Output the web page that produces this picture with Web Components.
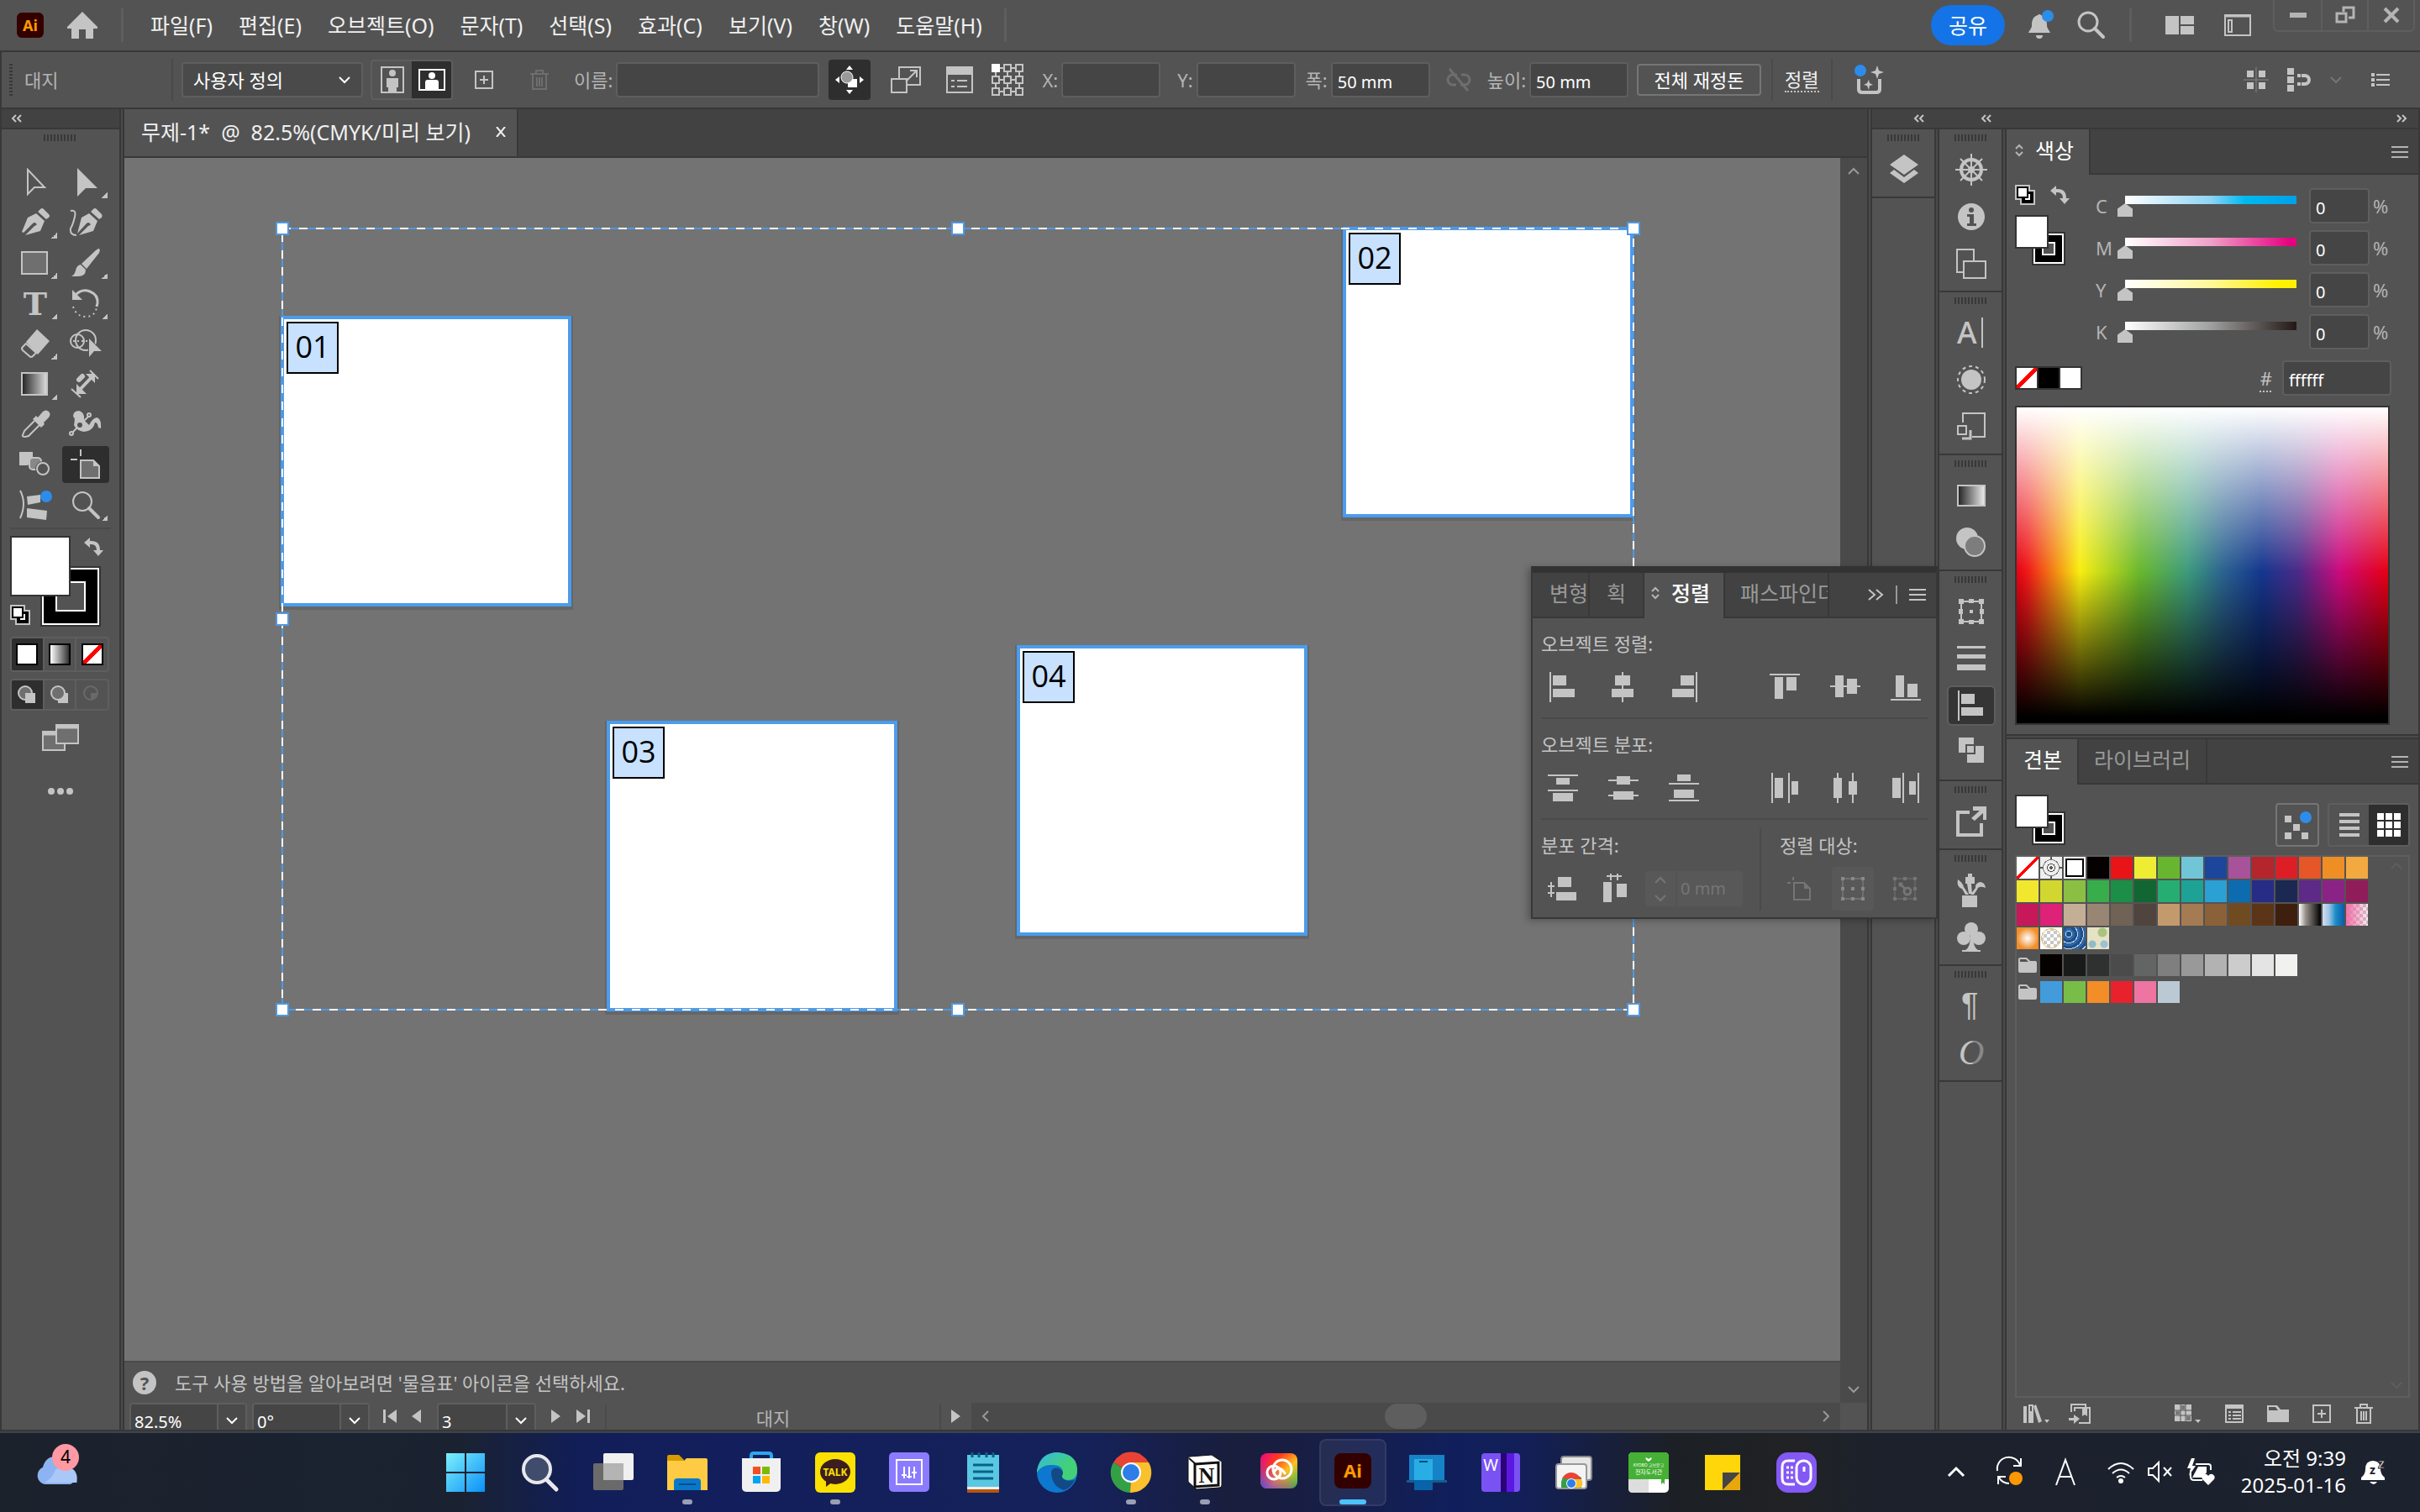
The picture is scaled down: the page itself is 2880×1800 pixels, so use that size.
<!DOCTYPE html>
<html lang="ko">
<head>
<meta charset="utf-8">
<title>무제-1* @ 82.5%(CMYK/미리 보기)</title>
<style>
  html, body {
    height: 100%;
    margin: 0;
  }
  body {
    background: #383838;
    color: #c4c4c4;
    font: 22px/28px "Noto Sans", "Noto Sans CJK KR", sans-serif;
    overflow: hidden;
  }
</style>
</head>
<body>
<app-shell>
  <menu-bar slot="menu"></menu-bar>
  <control-bar slot="control"></control-bar>
  <tool-box></tool-box>
  <doc-window></doc-window>
  <panel-dock>
    <color-panel></color-panel>
    <swatch-panel></swatch-panel>
  </panel-dock>
  <align-panel slot="floating"></align-panel>
  <task-bar slot="taskbar"></task-bar>
</app-shell>

<script>
// Icons: name -> [width, height, svg content]
const bars = (...list) => list.map(([x, y, w, h]) => `<rect x="${x}" y="${y}" width="${w}" height="${h}"/>`).join('');
const line = (d, w = 2) => `<path d="${d}" fill="none" stroke="currentColor" stroke-width="${w}"/>`;

const ICONS = {
  home: [36, 32, '<path d="M18 0 36 18v2h-5v12h-9V21h-8v11H5V20H0v-2z"/>'],
  bell: [30, 36, '<path d="M11 6a3 3 0 0 1 4 0c6 2 7 7 7 12 0 4 3 6 4 9H0c1-3 4-5 4-9 0-5 1-10 7-12zM9 30h8a4 4 0 0 1-8 0z"/><circle cx="23" cy="7" r="7" fill="#2d8ceb"/>'],
  search: [34, 34, '<circle cx="13" cy="13" r="11" fill="none" stroke="currentColor" stroke-width="3"/><path d="M21 21l10 10" stroke="currentColor" stroke-width="4" stroke-linecap="round"/>'],
  layout: [34, 22, bars([0, 0, 16, 22], [18, 0, 16, 10], [18, 12, 16, 10])],
  workspace: [32, 26, line('M1 1h30v24H1z') + line('M0 2h32', 3) + line('M5 7h4v14H5z')],
  minimize: [20, 6, bars([0, 0, 20, 6])],
  restore: [24, 20, line('M10 6V1h12v12h-6', 3) + line('M2 8h11v10H2z', 3)],
  close: [20, 16, line('M2 0l16 16M18 0L2 16', 4)],
  portrait: [28, 32, line('M1 1h26v30H1z') + '<circle cx="14" cy="8" r="4"/><path d="M7 14h14v11h-2v6H9v-6H7z"/>'],
  landscape: [32, 26, line('M1 1h30v24H1z') + '<circle cx="16" cy="8" r="4"/><path d="M8 25V16q0-3 3-3h10q3 0 3 3v9z"/>'],
  plusBox: [22, 22, line('M1 1h20v20H1zM11 6v10M6 11h10')],
  trash: [22, 24, line('M0 5h22M7 4V1h8v3M3 6v17h16V6M8 9v11M11 9v11M14 9v11')],
  moveArt: [34, 34, '<path d="M17 0l4 5h-8zM17 34l4-5h-8zM0 17l5-4v8zM34 17l-5-4v8z"/><path d="M15 16h11v10H15z"/><circle cx="14" cy="14" r="7" fill="#999" stroke="#fff"/>'],
  scaleArt: [36, 32, line('M1 15h18v16H1zM10 14V1h25v21H20M18 18L30 6M23 5h8v8')],
  options: [32, 32, line('M1 1h30v30H1zM6 17h4M6 24h4M13 17h12M13 24h12') + bars([0, 0, 32, 10])],
  refPoint: [38, 38, line('M9 5h5M24 5h5M9 19h5M24 19h5M9 33h5M24 33h5M5 9v5M5 24v5M19 9v5M19 24v5M33 9v5M33 24v5M15 1h8v8h-8zM29 1h8v8h-8zM1 15h8v8H1zM15 15h8v8h-8zM29 15h8v8h-8zM1 29h8v8H1zM15 29h8v8h-8zM29 29h8v8h-8z') + '<path d="M0 0h10v10H0z" fill="#fff"/>'],
  unlink: [28, 26, line('M12 7H7a5 5 0 0 0 0 12h4M17 7h4a5 5 0 0 1 0 12h-5M3 0l22 26', 3)],
  generate: [38, 36, line('M5 17v12q0 4 4 4h17q4 0 4-4V17', 4) + '<path d="M27 1l2 6 6 2-6 2-2 6-2-6-6-2 6-2zM17 18l1 4 4 2-4 1-1 5-2-5-4-1 4-2z"/><circle cx="7" cy="7" r="7" fill="#2d8ceb"/>'],
  pixelGrid: [30, 30, bars([4, 4, 8, 8], [18, 4, 8, 8], [4, 18, 8, 8], [18, 18, 8, 8]) + '<path d="M15 0v30M0 15h30" stroke="#888" stroke-width="1"/>'],
  snap: [28, 28, bars([0, 0, 8, 8], [0, 10, 8, 8], [0, 20, 8, 8], [12, 7, 4, 4], [12, 17, 4, 4]) + line('M17 9h4a5 5 0 0 1 0 10h-4', 4)],
  list: [22, 16, bars([0, 0, 4, 4], [0, 6, 4, 4], [0, 12, 4, 4], [6, 1, 16, 2], [6, 7, 16, 2], [6, 13, 16, 2])],
  chevron: [16, 10, line('M2 2l6 6 6-6')],
  chevronUp: [16, 10, line('M2 8l6-6 6 6')],
  chevronLeft: [10, 16, line('M8 2L2 8l6 6')],
  chevronRight: [10, 16, line('M2 2l6 6-6 6')],
  collapse: [12, 8, line('M5 0L1 4l4 4M11 0L7 4l4 4')],
  expand: [12, 8, line('M1 0l4 4-4 4M7 0l4 4-4 4')],
  expandBig: [20, 14, line('M2 1l7 6-7 6M11 1l7 6-7 6')],
  burger: [20, 14, bars([0, 0, 20, 2], [0, 6, 20, 2], [0, 12, 20, 2])],
  sorter: [10, 16, line('M1 6l4-4 4 4M1 10l4 4 4-4')],
  // Tools
  select: [36, 36, line('M9 3v29l8-8h12z')],
  direct: [36, 36, '<path d="M8 1v34l10-10h14z"/>'],
  pen: [36, 36, '<path d="M24 2q2-2 4 0l6 6q2 2 0 4l-3 2L21 5zM19 7l10 9-5 12-18 5 11-11q4-1 2-3t-4 0L4 30 2 29 9 12z"/>'],
  curvature: [40, 36, '<path d="M29 2q2-2 4 0l6 6q1 2 0 4l-3 2L26 5zM24 7l10 9-5 12-17 5 11-11q4-1 2-3t-4 0L10 31l5-19z"/>' + line('M2 4q7-2 5 7T2 25q-1 8 7 8')],
  rect: [34, 30, '<path d="M1 2h30v26H1z" fill="#6f6f6f" stroke="currentColor" stroke-width="2"/>'],
  brush: [36, 36, '<path d="M33 1q3 0 1 5L19 25l-6-6L30 3zM12 20l6 6q0 8-9 8H1q4-2 5-7 1-6 6-7z"/>'],
  type: [36, 36, '<text x="18" y="32" text-anchor="middle" font-family="DejaVu Serif" font-size="38" font-weight="700">T</text>'],
  rotate: [36, 36, line('M5 9Q13 0 23 4t9 14l-1 4', 3) + '<path d="M2 2v12h12z"/><path d="M3 22q4 12 15 12t13-11" fill="none" stroke="currentColor" stroke-width="2" stroke-dasharray="2 4"/>'],
  eraser: [36, 36, '<path d="M20 1l15 14-14 16L7 16z"/>' + line('M7 18l12 11-4 4q-2 2-4 0l-8-7q-2-2 0-4z')],
  shape: [40, 36, '<g fill="none" stroke="currentColor" stroke-width="2"><circle cx="10" cy="15" r="8"/><circle cx="20" cy="14" r="12"/></g><path d="M5 15h20" stroke="currentColor" stroke-width="2" stroke-dasharray="2 3"/><path d="M23 9v28l8-9h9z" fill="#535353"/><path d="M24 12v22l6-7h9z"/>'],
  gradient: [34, 30, '<linearGradient id="g"><stop stop-color="#222"/><stop offset="1" stop-color="#ddd"/></linearGradient><path d="M1 2h30v26H1z" fill="url(#g)" stroke="currentColor" stroke-width="2"/>'],
  measure: [36, 36, line('M23 2l10 10M1 24l11 10') + line('M10 26L26 9', 4) + '<path d="M18 6h11v11zM7 18v12h12z"/><path d="M10 13l4-4" stroke="currentColor" stroke-width="6" stroke-linecap="round"/>'],
  dropper: [36, 36, '<path d="M21 10l6-7q4-3 7 0t0 7l-6 6 1 2-4 4-10-10 4-4z"/>' + line('M17 14L5 26q-1 3-2 5t3 2l4-1 13-13')],
  puppet: [40, 36, '<path d="M5 9Q5 2 12 2q7 2 6 11l6 6q4-8 9-9 6 1 5 13l-3-1q-1-7-4-6-2 10-13 11-9-1-12-8 2-9-1-10z"/><g fill="#535353" stroke="currentColor" stroke-width="2"><path d="M4 28L24 8"/><circle cx="3" cy="29" r="2"/><circle cx="24" cy="7" r="2"/><circle cx="13" cy="19" r="4"/></g>'],
  blend: [38, 32, '<path d="M0 1h16v8l-6 8H0z"/><rect x="12" y="8" width="14" height="14" rx="4" fill="#888" stroke="currentColor" stroke-width="2"/><circle cx="28" cy="21" r="9" fill="#535353"/><circle cx="28" cy="21" r="7" fill="none" stroke="currentColor" stroke-width="2"/>'],
  artboard: [36, 36, '<path d="M12 13h15l7 7v14H12z" fill="#6f6f6f" stroke="currentColor" stroke-width="2"/><path d="M27 12v8h8z"/>' + line('M12 0v8M0 12h8')],
  wrap: [40, 38, line('M2 2q8 15 0 33') + '<path d="M10 9l16-2v9l-15 3zM10 23l24 3-1 11-23-3z"/><circle cx="33" cy="9" r="7" fill="#2d8ceb"/>'],
  zoom: [36, 36, '<circle cx="14" cy="14" r="11" fill="none" stroke="currentColor" stroke-width="2"/><path d="M22 22l11 11" stroke="currentColor" stroke-width="4" stroke-linecap="round"/>'],
  swap: [24, 22, '<path d="M0 6l7-6v4q12-1 12 11h4l-6 7-6-7h4q0-8-8-7v4z"/>'],
  defaults: [24, 24, '<path d="M0 0h18v6h6v18H6v-6H0z"/><path d="M8 8h14v14H8z" fill="#000"/><path d="M12 17h5v-6" fill="none" stroke="#fff" stroke-width="2"/><path d="M3 3h12v12H3z" fill="#fff" stroke="#000" stroke-width="2"/>'],
  drawNormal: [22, 22, '<circle cx="9" cy="9" r="8" fill="#6f6f6f" stroke="currentColor" stroke-width="2"/><rect x="9" y="9" width="12" height="12"/>'],
  drawBehind: [22, 22, '<rect x="9" y="9" width="12" height="12"/><circle cx="9" cy="9" r="8" fill="#6f6f6f" stroke="currentColor" stroke-width="2"/>'],
  drawInside: [22, 22, '<circle cx="9" cy="9" r="8" fill="none" stroke="currentColor" stroke-width="2"/><path d="M9 9h7v2q-2 5-7 5z"/>'],
  screens: [44, 32, '<g fill="#6f6f6f" stroke="currentColor" stroke-width="2"><path d="M1 9h26v22H1z"/><path d="M1 11h26" stroke-width="5"/><path d="M17 1h26v22H17z"/><path d="M17 3h26" stroke-width="5"/></g>'],
  dots: [30, 8, '<circle cx="4" cy="4" r="4"/><circle cx="15" cy="4" r="4"/><circle cx="26" cy="4" r="4"/>'],
  // Dock
  layers: [34, 36, '<path d="M17 0l17 12-17 12L0 12zM5 18l12 9 12-9 5 4-17 12L0 22z"/>'],
  wheel: [38, 38, '<circle cx="19" cy="19" r="12" fill="none" stroke="currentColor" stroke-width="4"/><circle cx="19" cy="19" r="4"/>' + line('M19 0v38M0 19h38M6 6l26 26M32 6L6 32')],
  info: [32, 32, '<circle cx="16" cy="16" r="16"/><path d="M11 13h8v11h3v3H11v-3h3v-8h-3z" fill="#535353"/><circle cx="16" cy="8" r="3" fill="#535353"/>'],
  artboards: [36, 36, line('M8 28H1V1h20v14M9 15h26v20H9z')],
  character: [34, 36, '<text x="0" y="31" font-family="Noto Sans" font-size="36" font-weight="500">A</text>' + bars([29, 0, 2, 36])],
  appearance: [34, 34, '<circle cx="17" cy="17" r="12"/><circle cx="17" cy="17" r="16" fill="none" stroke="currentColor" stroke-width="2" stroke-dasharray="4 4"/>'],
  assets: [34, 34, line('M7 12V1h26v28H18M1 16h10v10H1z') + line('M6 31h10V21', 3)],
  gradientPanel: [34, 26, '<linearGradient id="g"><stop stop-color="#222"/><stop offset="1" stop-color="#eee"/></linearGradient><path d="M1 1h32v24H1z" fill="url(#g)" stroke="currentColor" stroke-width="2"/>'],
  opacity: [36, 36, '<circle cx="13" cy="13" r="13"/><circle cx="22" cy="22" r="12" fill="#7d7d7d" stroke="currentColor" stroke-width="2"/>'],
  transform: [30, 30, line('M3 3h24v24H3z') + bars([0, 0, 6, 6], [12, 0, 6, 5], [24, 0, 6, 6], [0, 12, 5, 6], [25, 12, 5, 6], [0, 24, 6, 6], [12, 25, 6, 5], [24, 24, 6, 6], [13, 13, 4, 4])],
  strokes: [34, 30, bars([0, 0, 34, 3], [0, 10, 34, 5], [0, 22, 34, 7])],
  pathfinder: [30, 36, '<path d="M0 0h18v10h12v20H10V18H0z"/><path d="M9 19V9h10v10H9z" stroke="#535353" stroke-width="2"/>'],
  exportIcon: [36, 36, line('M16 7H2v27h28V20', 4) + '<path d="M20 0h16v16h-4V8L22 17l-4-3 10-9h-8z"/>'],
  brushes: [34, 40, '<path d="M6 26h18v14H6zM13 0h5v4h3v8h-4l1 12h-4l-2-12h-2V4h3zM1 7q6 4 7 9l6 9h-4l-4-7q-7-2-5-11zM31 16q-6-1-7 3l-4 6h-4l6-8q-1-5 5-7 6 0 7 7z"/>'],
  symbols: [34, 36, '<circle cx="17" cy="8" r="8"/><circle cx="8" cy="19" r="8"/><circle cx="26" cy="19" r="8"/><path d="M16 15h3q0 15 6 18H10q6-3 6-18zM6 33h22v2H6z"/>'],
  paragraph: [30, 36, '<text x="3" y="29" font-family="Liberation Sans" font-size="38">¶</text>'],
  opentype: [30, 36, '<linearGradient id="g"><stop offset=".5" stop-color="#c4c4c4"/><stop offset=".6" stop-color="#888"/></linearGradient><text x="0" y="31" font-family="Liberation Serif" font-size="42" font-style="italic" fill="url(#g)">O</text>'],
  // Align and distribute
  alignLeft: [36, 36, bars([2, 0, 2, 36], [6, 4, 16, 12], [6, 20, 26, 10])],
  alignCenter: [36, 36, bars([16, 0, 2, 36], [8, 4, 18, 12], [4, 20, 26, 10])],
  alignRight: [36, 36, bars([32, 0, 2, 36], [14, 4, 16, 12], [4, 20, 26, 10])],
  alignTop: [36, 36, bars([0, 2, 36, 2], [6, 6, 10, 26], [20, 6, 12, 16])],
  alignMiddle: [36, 36, bars([0, 16, 36, 2], [6, 4, 10, 26], [20, 8, 12, 18])],
  alignBottom: [36, 36, bars([6, 4, 10, 26], [20, 14, 12, 16], [0, 32, 36, 2])],
  distTop: [36, 36, bars([0, 2, 36, 2], [10, 6, 16, 8], [0, 20, 36, 2], [6, 24, 24, 10])],
  distMiddle: [36, 36, bars([0, 8, 36, 2], [10, 4, 16, 10], [0, 26, 36, 2], [6, 22, 24, 10])],
  distBottom: [36, 36, bars([10, 2, 16, 8], [0, 12, 36, 2], [6, 20, 24, 10], [0, 32, 36, 2])],
  distLeft: [36, 36, bars([2, 0, 2, 36], [6, 6, 10, 24], [22, 0, 2, 36], [26, 10, 8, 16])],
  distCenter: [36, 36, bars([4, 6, 10, 24], [8, 0, 2, 36], [22, 10, 10, 16], [26, 0, 2, 36])],
  distRight: [36, 36, bars([2, 6, 10, 24], [14, 0, 2, 36], [22, 10, 8, 16], [32, 0, 2, 36])],
  spaceV: [36, 36, bars([12, 4, 16, 12], [10, 22, 24, 10], [3, 10, 2, 18], [0, 14, 8, 2], [0, 22, 8, 2])],
  spaceH: [36, 36, bars([6, 10, 10, 24], [22, 12, 12, 16], [10, 2, 18, 2], [14, 0, 2, 8], [22, 0, 2, 8])],
  toArtboard: [28, 28, line('M8 7h12l7 7v13H8zM7 0v4M0 7h4') + '<path d="M20 6v8h8z"/>'],
  toSelection: [28, 28, line('M2 2h24v24H2z', 1) + bars([0, 0, 4, 4], [12, 0, 4, 4], [24, 0, 4, 4], [0, 12, 4, 4], [12, 12, 4, 4], [24, 12, 4, 4], [0, 24, 4, 4], [12, 24, 4, 4], [24, 24, 4, 4])],
  toKey: [28, 28, line('M2 2h24v24H2z', 1) + bars([0, 0, 4, 4], [12, 0, 4, 4], [24, 0, 4, 4], [0, 12, 4, 4], [24, 12, 4, 4], [0, 24, 4, 4], [12, 24, 4, 4], [24, 24, 4, 4]) + '<circle cx="17" cy="17" r="4" fill="none" stroke="currentColor" stroke-width="3"/>' + line('M7 7l8 8M7 11l4-4', 3)],
  // Swatches
  swatchCloud: [34, 34, bars([2, 6, 8, 8], [12, 16, 8, 8], [2, 26, 8, 8], [22, 26, 8, 8]) + '<circle cx="27" cy="8" r="7" fill="#2d8ceb"/>'],
  swatchList: [24, 28, bars([0, 0, 24, 4], [0, 8, 24, 4], [0, 16, 24, 4], [0, 24, 24, 4])],
  swatchGrid: [28, 28, bars([0, 0, 8, 8], [10, 0, 8, 8], [20, 0, 8, 8], [0, 10, 8, 8], [10, 10, 8, 8], [20, 10, 8, 8], [0, 20, 8, 8], [10, 20, 8, 8], [20, 20, 8, 8])],
  folder: [22, 18, '<path d="M0 2q0-2 2-2h8l4 4h6q2 0 2 2v10q0 2-2 2H2q-2 0-2-2z"/><path d="M2 2h7l3 3H2z" fill="#535353"/>'],
  folderBig: [26, 20, '<path d="M0 0h12l4 5h10v15H0z"/><path d="M2 2h8l3 4H2z" fill="#535353"/>'],
  library: [32, 22, bars([0, 2, 4, 20], [6, 0, 6, 22]) + '<path d="M12 2l3-2 7 20-4 2zM25 18h6l-3 4z"/><path d="M8 2h2v6H8z" fill="#535353"/>'],
  addLibrary: [26, 24, line('M3 10V1h17v3M7 9V5h18v18H12') + '<path d="M0 17h6v-4l7 5-7 6v-4H0zM16 5h6v10l-3-2-3 2z"/>'],
  kinds: [32, 22, bars([0, 0, 20, 20]) + '<path d="M7 0v20M13 0v20M0 7h20M0 13h20" stroke="#535353" stroke-width="1"/><path d="M8 1h4v5H8zM14 14h5v5h-5zM1 8h5v4H1z" fill="#777"/><path d="M24 18h7l-3 4z"/>'],
  swatchOptions: [22, 22, line('M1 1h20v20H1zM4 9h3M4 13h3M4 17h3M9 9h10M9 13h10M9 17h10') + bars([0, 0, 22, 5])],
  // Status bar
  first: [16, 16, bars([0, 0, 3, 16]) + '<path d="M16 0v16L5 8z"/>'],
  prev: [12, 16, '<path d="M11 0v16L0 8z"/>'],
  next: [12, 16, '<path d="M0 0v16l11-8z"/>'],
  last: [16, 16, '<path d="M0 0v16l11-8z"/>' + bars([13, 0, 3, 16])],
  // System tray
  trayUp: [22, 14, line('M2 12l9-9 9 9', 3)],
  sync: [34, 34, line('M2 16A14 14 0 0 1 29 9M30 1v9h-9M3 32v-9h9M4 24q4 7 12 7') + '<circle cx="24" cy="25" r="8" fill="#ff9800"/>'],
  inputMode: [26, 34, line('M2 33L13 3l11 30M6 23h14')],
  wifi: [34, 28, line('M2 11q15-14 30 0M7 16q10-9 20 0M12 21q5-4 10 0') + '<circle cx="17" cy="25" r="3"/>'],
  mute: [32, 26, line('M2 9h5l7-7v22l-7-7H2zM20 8l9 10M29 8l-9 10')],
  battery: [34, 32, line('M10 7h15q3 0 3 3v4M4 14v8q0 4 4 4h10') + '<path d="M5 0L0 12h4l-2 9 8-12H6l3-9zM13 10h10v7l-5 6H6zM25 32l-7-7q-2-4 2-6 3-1 5 2 2-3 5-2 4 2 2 6z"/>'],
  doNotDisturb: [30, 34, '<path d="M14 4q9 0 9 10 0 6 5 10v3H0v-3q5-4 5-10 0-10 9-10zM10 29h9q-4 6-9 0z"/><text x="10" y="20" font-size="14" font-weight="700" fill="#1c222e">z</text><text x="20" y="13" font-size="16" font-weight="700" stroke="#1c222e" stroke-width="1">z</text>']
};

const appIcon = (body) => [48, 48, body];
const APPS = {
  start: appIcon('<linearGradient id="g" x2="1" y2="1"><stop stop-color="#7df0fb"/><stop offset="1" stop-color="#0a90f8"/></linearGradient><path d="M1 1h22v22H1zM25 1h22v22H25zM1 25h22v22H1zM25 25h22v22H25z" fill="url(#g)"/>'),
  search: appIcon('<circle cx="21" cy="20" r="16" fill="#404c6c" stroke="#e8e8ec" stroke-width="4"/><path d="M33 33l11 11" stroke="#e8e8ec" stroke-width="5" stroke-linecap="round"/>'),
  views: appIcon('<rect x="12" y="1" width="36" height="32" rx="2" fill="#f0f0f0"/><rect y="13" width="36" height="32" rx="2" fill="#6a6a6a"/><path d="M12 13h24v20H12z" fill="#b4b4b4"/>'),
  explorer: appIcon('<path d="M0 5q0-2 2-2h12l6 6v10H0z" fill="#d89a00"/><path d="M0 10h20l3-3h23q2 0 2 2v36H0z" fill="#ffcb45"/><path d="M8 45V35q0-4 4-4h24q4 0 4 4v10z" fill="#0a78c8"/><path d="M14 38h20" stroke="#064d8d" stroke-width="2"/>'),
  store: appIcon('<path d="M12 12V4q0-3 3-3h18q3 0 3 3v8" fill="none" stroke="#2ba8f0" stroke-width="4"/><path d="M1 7h46v35q0 5-6 5H7q-6 0-6-5z" fill="#f0f0f0"/><path d="M14 17h9v9h-9z" fill="#f25022"/><path d="M25 17h9v9h-9z" fill="#7fba00"/><path d="M14 28h9v9h-9z" fill="#00a4ef"/><path d="M25 28h9v9h-9z" fill="#ffb900"/>'),
  talk: appIcon('<rect width="48" height="48" rx="6" fill="#fae100"/><ellipse cx="24" cy="23" rx="18" ry="15" fill="#3c1e1e"/><path d="M13 32v9l8-6z" fill="#3c1e1e"/><text x="24" y="28" text-anchor="middle" font-size="12" font-weight="700" fill="#fae100">TALK</text>'),
  equalizer: appIcon('<rect width="48" height="47" rx="5" fill="#8b7bff"/><path d="M9 9h30v29H9zM18 17v14M24 17v14M30 17v14M15 27h6M21 29h6M27 24h6" fill="none" stroke="#fff" stroke-width="2"/>'),
  notepad: appIcon('<path d="M5 3h38v38H5z" fill="#5ac8e2"/><path d="M5 41h38v3H5z" fill="#eee"/><path d="M5 44h38v4H5z" fill="#b8560e"/><path d="M12 15h24M12 23h24M12 31h24M11 0v6M19 0v6M28 0v6M36 0v6" stroke="#076386" stroke-width="3"/>'),
  edge: appIcon('<linearGradient id="g" x2="1" y2="1"><stop stop-color="#35b8e8"/><stop offset=".6" stop-color="#42d078"/></linearGradient><circle cx="24" cy="24" r="24" fill="#0d78cf"/><path d="M0 22Q4 0 25 0q23 2 23 21 0 12-11 12-10-1-6-8 0-10-12-10Q6 14 0 24z" fill="url(#g)"/><path d="M17 23q2-6 9-4 5 2 5 6-4 7 6 9l8-1q-4 9-13 12-15-5-15-22z" fill="#124a86"/>'),
  chrome: appIcon('<path d="M24 24L3 12A24 24 0 0 1 45 12z" fill="#ea4335"/><path d="M24 24L3 12a24 24 0 0 0 20 36z" fill="#34a046"/><path d="M24 24l-1 24A24 24 0 0 0 45 12H24z" fill="#fbc02d"/><circle cx="24" cy="24" r="12" fill="#fff"/><circle cx="24" cy="24" r="10" fill="#2f7de9"/>'),
  notion: appIcon('<path d="M4 7q0-2 2-2l26-2 12 8v28q0 3-3 3l-27 2-10-9z" fill="#fff" stroke="#111" stroke-width="1"/><path d="M12 14l28-2v27l-28 2z" fill="#fff" stroke="#111" stroke-width="3"/><path d="M5 7l8 7" stroke="#111" stroke-width="2"/><text x="26" y="36" text-anchor="middle" font-family="Liberation Serif" font-size="26" font-weight="700" fill="#111">N</text>'),
  cloud: appIcon('<linearGradient id="g" x2="1" y2="1"><stop stop-color="#f0047f"/><stop offset=".3" stop-color="#ff3b1e"/><stop offset=".6" stop-color="#ffc21e"/><stop offset="1" stop-color="#20b858"/></linearGradient><linearGradient id="h" x1="0" y1="1" x2=".6" y2=".4"><stop stop-color="#4a4cf0"/><stop offset="1" stop-color="#f0047f" stop-opacity="0"/></linearGradient><rect x="2" y="1" width="44" height="42" rx="8" fill="url(#g)"/><rect x="2" y="1" width="44" height="42" rx="8" fill="url(#h)"/><g fill="none" stroke="#fff" stroke-width="3"><circle cx="28" cy="20" r="11"/><circle cx="18" cy="24" r="8"/><path d="M18 24q4-8 10-3l4 5"/></g>'),
  illustrator: appIcon('<rect x="2" y="1" width="44" height="42" rx="8" fill="#330000"/><text x="24" y="30" text-anchor="middle" font-size="22" font-weight="700" fill="#ff9a00">Ai</text>'),
  phone: appIcon('<path d="M3 3h42v31H3z" fill="#1683c8"/><path d="M0 33h48v3H0z" fill="#155c8c"/><path d="M9 8h22v37H9z" fill="#28aee4"/><path d="M9 33h22v12H9z" fill="#0a62a8"/><path d="M15 11h10" stroke="#074c78" stroke-width="2"/>'),
  word: appIcon('<rect x="1" y="1" width="46" height="46" rx="4" fill="#7a52f4"/><path d="M24 1h16v46H24z" fill="#2a0474"/><path d="M31 1h9v46h-9z" fill="#5c18e0"/><text x="12" y="22" text-anchor="middle" font-size="19" fill="#fff">W</text>'),
  remote: appIcon('<rect x="8" y="5" width="36" height="28" rx="3" fill="#e6e6e6" stroke="#888" stroke-width="2"/><rect x="2" y="14" width="36" height="29" rx="3" fill="#f4f4f4" stroke="#999" stroke-width="2"/><path d="M8 42V35a13 13 0 0 1 12-11l12 6v12z" fill="#34a046"/><path d="M9 31q4-7 11-7t12 8z" fill="#ea4335"/><path d="M20 32h12q3 6-1 10H20z" fill="#fbc02d"/><circle cx="20" cy="37" r="6" fill="#fff"/><circle cx="20" cy="37" r="5" fill="#2f7de9"/>'),
  kyobo: appIcon('<rect width="48" height="48" rx="5" fill="#fff"/><path d="M0 32h24v16H5q-5 0-5-5z" fill="#ddd"/><path d="M0 32V5q0-5 5-5h38q5 0 5 5v27zM39 32h4v6l-2-2-2 2z" fill="#45b035"/><path d="M24 11q-5-3-3-5l3 2 3-2q2 2-3 5z" fill="#fff"/><text x="24" y="17" text-anchor="middle" font-size="5" fill="#fff">KYOBO 교보문고</text><text x="24" y="26" text-anchor="middle" font-size="7" fill="#fff">전자도서관</text>'),
  sticky: appIcon('<path d="M3 3h42v42H3z" fill="#ffd60a"/><path d="M24 45V24h21z" fill="#454545"/><path d="M24 45l21-21v21z" fill="#e8a80c"/>'),
  recorder: appIcon('<rect width="48" height="48" rx="14" fill="#8458f4"/><g fill="none" stroke="#fff" stroke-width="3"><path d="M22 38h-8q-7 0-7-7V17q0-7 7-7h8"/><rect x="24" y="10" width="17" height="28" rx="8"/><path d="M33 17v6"/></g><path d="M12 18h3M12 24h3M12 30h3M17 18h3M17 24h3M17 30h3" stroke="#fff" stroke-width="3"/>')
};

class AiIcon extends HTMLElement {
  connectedCallback() {
    const set = this.hasAttribute('app') ? APPS : ICONS;
    const [w, h, body] = set[this.getAttribute('name')];
    this.attachShadow({mode: 'open'}).innerHTML = `
    <style>
      :host { display: inline-flex; flex: none; }
      svg { display: block; overflow: visible; }
    </style>
    <svg width="${w}" height="${h}" viewBox="0 0 ${w} ${h}" fill="currentColor" aria-hidden="true">${body}</svg>`;
  }
}
window.customElements.define('ai-icon', AiIcon);

const icon = (name) => `<ai-icon name="${name}"></ai-icon>`;

// Rules that every shadow root starts from
const BASE = `
  :host { display: block; box-sizing: border-box; }
  * { box-sizing: border-box; }
  button, input, select {
    margin: 0;
    padding: 0;
    border: 0;
    background: none;
    color: inherit;
    font: inherit;
    outline: none;
    border-radius: 0;
  }
  button {
    display: inline-flex;
    align-items: center;
    justify-content: center;
    flex: none;
    white-space: nowrap;
  }
  input, select { min-width: 0; }
  .field {
    height: 42px;
    padding: 4px 6px 0;
    border: 2px solid #5e5e5e;
    border-radius: 4px;
    background: #454545;
    color: #fff;
    font-size: 20px;
  }
  .group {
    display: flex;
    border: 2px solid #5e5e5e;
    border-radius: 4px;
    overflow: hidden;
  }
  .on { background: #2e2e2e; color: #fff; }
`;

class Panel extends HTMLElement {
  connectedCallback() {
    this.attachShadow({mode: 'open'}).innerHTML = `<style>${BASE}${this.css()}</style>${this.html()}`;
  }
}

class AppShell extends Panel {
  css() {
    return `
      :host {
        display: flex;
        flex-direction: column;
        height: 100vh;
      }
      main {
        position: relative;
        display: flex;
        gap: 2px;
        flex: 1;
        min-height: 0;
        background: #4a4a4a;
        border-bottom: 2px solid #383838;
      }
    `;
  }
  html() {
    return `
      <slot name="menu"></slot>
      <slot name="control"></slot>
      <main><slot></slot><slot name="floating"></slot></main>
      <slot name="taskbar"></slot>`;
  }
}
window.customElements.define('app-shell', AppShell);

class MenuBar extends Panel {
  css() {
    return `
      :host {
        display: flex;
        align-items: center;
        height: 62px;
        background: #535353;
        border-bottom: 2px solid #383838;
      }
      .logo {
        width: 32px;
        height: 30px;
        margin: 0 28px 0 20px;
        border-radius: 6px;
        background: #330000;
        color: #ff9a00;
        font: 700 18px/30px "Noto Sans";
        text-align: center;
      }
      hr {
        width: 3px;
        height: 40px;
        margin: 0;
        border: 0;
        background: #5e5e5e;
      }
      nav {
        display: flex;
        gap: 31px;
        margin: 0 26px 0 32px;
        font-size: 25px;
        color: #f0f0f0;
      }
      .tools {
        display: flex;
        align-items: center;
        gap: 28px;
        margin-left: auto;
      }
      .share {
        width: 88px;
        height: 48px;
        border-radius: 24px;
        background: #1473e6;
        color: #fff;
        font-size: 25px;
      }
      .tools hr { margin-right: 12px; }
      .tools .wide { margin-right: 8px; }
      .window {
        display: flex;
        align-self: flex-start;
        height: 38px;
        margin: 0 6px 0 26px;
        border: 2px solid #5e5e5e;
        border-top: 0;
        border-radius: 0 0 6px 6px;
        color: #b4b4b4;
      }
      .window button {
        width: 55px;
      }
      .window button + button {
        border-left: 2px solid #5e5e5e;
      }
    `;
  }
  html() {
    const menus = ['파일(F)', '편집(E)', '오브젝트(O)', '문자(T)', '선택(S)', '효과(C)', '보기(V)', '창(W)', '도움말(H)'];
    return `
      <div class="logo">Ai</div>
      <button aria-label="홈">${icon('home')}</button>
      <hr style="margin-left: 28px">
      <nav>${menus.map((menu) => `<button>${menu}</button>`).join('')}</nav>
      <hr>
      <div class="tools">
        <button class="share">공유</button>
        <button aria-label="알림">${icon('bell')}</button>
        <button aria-label="검색">${icon('search')}</button>
        <hr>
        <button class="wide" aria-label="문서 정돈">${icon('layout')}</button>
        <button aria-label="작업 영역">${icon('workspace')}</button>
      </div>
      <div class="window">
        <button aria-label="최소화">${icon('minimize')}</button>
        <button aria-label="복원">${icon('restore')}</button>
        <button aria-label="닫기">${icon('close')}</button>
      </div>`;
  }
}
window.customElements.define('menu-bar', MenuBar);

class ControlBar extends Panel {
  css() {
    return `
      :host {
        display: flex;
        align-items: center;
        height: 68px;
        background: #535353;
        border-bottom: 2px solid #383838;
        border-left: 2px solid #383838;
      }
      .grip {
        width: 4px;
        height: 38px;
        margin: 0 14px 0 9px;
        background: repeating-linear-gradient(#383838 0 2px, transparent 2px 4px);
      }
      .title { width: 175px; color: #b4b4b4; }
      hr {
        width: 2px;
        height: 50px;
        margin: 0;
        border: 0;
        background: #4a4a4a;
      }
      .preset {
        display: flex;
        align-items: center;
        width: 216px;
        margin: 0 9px 0 10px;
        padding: 0 12px;
        background: #4a4a4a;
      }
      .preset select {
        flex: 1;
        appearance: none;
        font-size: 22px;
      }
      .group { height: 48px; }
      .group button { width: 47px; }
      .plain { margin-left: 26px; }
      .dim { margin: 0 30px 0 44px; color: #6e6e6e; }
      label {
        display: flex;
        align-items: center;
        gap: 4px;
        white-space: nowrap;
        color: #b4b4b4;
      }
      label .field { width: 118px; }
      label .name { width: 242px; }
      .move {
        width: 50px;
        height: 48px;
        margin: 0 24px 0 11px;
        border-radius: 4px;
      }
      .icons {
        display: flex;
        gap: 22px;
        margin-right: 22px;
      }
      .icons button:nth-child(2) { margin-left: 8px; }
      .size { margin-left: 12px; }
      .rearrange {
        width: 148px;
        height: 38px;
        margin: 0 12px 0 10px;
        border: 2px solid #757575;
        border-radius: 4px;
        color: #fff;
      }
      .align {
        height: 30px;
        margin: 0 14px;
        border-bottom: 2px dotted #c4c4c4;
        color: #f0f0f0;
      }
      .right {
        display: flex;
        align-items: center;
        margin-left: auto;
        gap: 22px;
        padding-right: 36px;
      }
      .right .last { margin-left: 12px; }
    `;
  }
  html() {
    return `
      <div class="grip"></div>
      <span class="title">대지</span>
      <hr>
      <div class="field preset">
        <select aria-label="사전 설정"><option>사용자 정의</option></select>
        ${icon('chevron')}
      </div>
      <div class="group">
        <button aria-label="세로">${icon('portrait')}</button>
        <button class="on" aria-label="가로">${icon('landscape')}</button>
      </div>
      <button class="plain" aria-label="새 대지">${icon('plusBox')}</button>
      <button class="dim" aria-label="대지 삭제">${icon('trash')}</button>
      <label>이름:<input class="field name"></label>
      <button class="move on" aria-label="아트웍 이동">${icon('moveArt')}</button>
      <div class="icons">
        <button aria-label="비율 조정">${icon('scaleArt')}</button>
        <button aria-label="대지 옵션">${icon('options')}</button>
        <button aria-label="참조점">${icon('refPoint')}</button>
      </div>
      <label>X:<input class="field"></label>
      <label style="margin-left: 20px">Y:<input class="field"></label>
      <label class="size">폭:<input class="field" value="50 mm"></label>
      <button style="margin: 0 20px; color: #6e6e6e" aria-label="비율 고정">${icon('unlink')}</button>
      <label>높이:<input class="field" value="50 mm"></label>
      <button class="rearrange">전체 재정돈</button>
      <hr>
      <button class="align">정렬</button>
      <hr>
      <button style="margin-left: 26px" aria-label="생성">${icon('generate')}</button>
      <div class="right">
        <button aria-label="픽셀에 물리기">${icon('pixelGrid')}</button>
        <button aria-label="물리기 옵션">${icon('snap')}</button>
        <button style="color: #757575" aria-label="더 보기">${icon('chevron')}</button>
        <button class="last" aria-label="메뉴">${icon('list')}</button>
      </div>`;
  }
}
window.customElements.define('control-bar', ControlBar);

class FillStroke extends Panel {
  css() {
    return `
      :host {
        --size: 40px;
        --shift: 20px;
        --band: 10px;
        display: grid;
        width: calc(var(--size) + var(--shift));
        height: calc(var(--size) + var(--shift));
      }
      button {
        grid-area: 1 / 1;
        width: var(--size);
        height: var(--size);
        border: 2px solid #333;
      }
      .fill { background: #fff; z-index: 1; }
      .stroke {
        place-self: end;
        padding: var(--band);
        background: #000;
        box-shadow: inset 0 0 0 2px #fff;
      }
      .stroke i {
        width: 100%;
        height: 100%;
        border: 2px solid #fff;
        background: #535353;
      }
      :host([large]) {
        --size: 72px;
        --shift: 36px;
        --band: 16px;
      }
    `;
  }
  html() {
    return '<button class="fill" aria-label="칠"></button><button class="stroke" aria-label="획"><i></i></button>';
  }
}
window.customElements.define('fill-stroke', FillStroke);

class ToolBox extends Panel {
  css() {
    return `
      :host {
        width: 144px;
        flex: none;
        background: #535353;
        border: solid #383838;
        border-width: 0 2px;
      }
      header {
        display: flex;
        align-items: center;
        height: 24px;
        padding-left: 12px;
        background: #424242;
        border-bottom: 2px solid #383838;
      }
      .grip {
        width: 38px;
        height: 8px;
        margin: 6px auto 25px 50px;
        background: repeating-linear-gradient(90deg, #383838 0 2px, transparent 2px 4px);
      }
      .tools {
        display: grid;
        grid-template-columns: 60px 60px;
        grid-auto-rows: 48px;
        place-items: center;
        padding-left: 10px;
      }
      .tools button {
        position: relative;
        width: 56px;
        height: 44px;
        border-radius: 4px;
      }
      .tools .more::after {
        content: "";
        position: absolute;
        right: 2px;
        bottom: 3px;
        border: solid transparent;
        border-width: 7px 0 0 7px;
        border-right: 0;
        width: 0;
        background: linear-gradient(135deg, transparent 50%, #c4c4c4 50%) border-box;
      }
      .tools .on { color: #c4c4c4; }
      .paint {
        display: grid;
        grid-template-columns: 108px auto;
        margin: 3px 10px 12px;
        padding-top: 8px;
        border-top: 2px solid #4a4a4a;
      }
      fill-stroke { grid-area: 1 / 1; }
      .swap {
        grid-area: 1 / 1;
        place-self: start end;
        margin: 2px -4px 0 0;
      }
      .defaults {
        grid-area: 1 / 1;
        place-self: end start;
        margin-bottom: 2px;
      }
      .group {
        height: 42px;
        margin: 0 10px 8px;
        width: 118px;
      }
      .group button { flex: 1; }
      .group button + button { border-left: 2px solid #5e5e5e; }
      .group i {
        width: 26px;
        height: 26px;
        border: 2px solid #000;
        background: #fff;
      }
      .group .fade { background: linear-gradient(90deg, #fff, #333); }
      .group .none { background: linear-gradient(-45deg, #fff0 43%, #f00 43% 57%, #fff0 57%) #fff; transform: scaleX(1); }
      .group .none { background: linear-gradient(135deg, #fff 43%, #f00 43% 57%, #fff 57%); }
      .modes { height: 38px; }
      .modes .on { color: #c4c4c4; }
      .modes .off { color: #6a6a6a; }
      .extra {
        display: flex;
        flex-direction: column;
        align-items: center;
        gap: 44px;
        padding: 8px 0 0 0;
      }
    `;
  }
  html() {
    // A star marks the tools that have a flyout of related tools
    const tools = ['select', 'direct*', 'pen*', 'curvature', 'rect*', 'brush*', 'type*', 'rotate*', 'eraser*', 'shape',
      'gradient*', 'measure', 'dropper', 'puppet', 'blend', 'artboard', 'wrap', 'zoom*'];
    const buttons = tools.map((tool) => {
      const name = tool.replace('*', '');
      const classes = [tool !== name ? 'more' : '', name === 'artboard' ? 'on' : ''].join(' ');
      return `<button class="${classes}" aria-label="${name}">${icon(name)}</button>`;
    });
    return `
      <header>${icon('collapse')}</header>
      <div class="grip"></div>
      <div class="tools">${buttons.join('')}</div>
      <div class="paint">
        <fill-stroke large></fill-stroke>
        <button class="swap" aria-label="칠과 획 교체">${icon('swap')}</button>
        <button class="defaults" aria-label="초기값">${icon('defaults')}</button>
      </div>
      <div class="group">
        <button class="on" aria-label="색상"><i></i></button>
        <button aria-label="그레이디언트"><i class="fade"></i></button>
        <button aria-label="없음"><i class="none"></i></button>
      </div>
      <div class="group modes">
        <button class="on" aria-label="표준 그리기">${icon('drawNormal')}</button>
        <button aria-label="배경 그리기">${icon('drawBehind')}</button>
        <button class="off" aria-label="내부 그리기">${icon('drawInside')}</button>
      </div>
      <div class="extra">
        <button aria-label="화면 모드">${icon('screens')}</button>
        <button aria-label="도구 모음 편집">${icon('dots')}</button>
      </div>`;
  }
}
window.customElements.define('tool-box', ToolBox);

class ArtBoard extends Panel {
  css() {
    return `
      :host {
        position: absolute;
        width: 346px;
        height: 346px;
        border: 4px solid #4b9ced;
        background: #fff;
        box-shadow: 0 2px 0 2px #666;
      }
      span {
        display: block;
        width: 62px;
        height: 62px;
        margin: 3px;
        border: 2px solid #000;
        background: #c7e1ff;
        color: #000;
        font: 36px/56px "Open Sans", "Noto Sans", sans-serif;
        text-align: center;
      }
    `;
  }
  html() {
    return '<span><slot></slot></span>';
  }
}
window.customElements.define('art-board', ArtBoard);

class DocWindow extends Panel {
  css() {
    return `
      :host {
        display: flex;
        flex-direction: column;
        flex: 1;
        min-width: 0;
        border: solid #383838;
        border-width: 0 2px;
        background: #535353;
      }
      .tabs {
        display: flex;
        height: 58px;
        background: #424242;
        border-bottom: 2px solid #383838;
      }
      .tab {
        display: flex;
        align-items: center;
        gap: 29px;
        padding: 0 12px 2px 20px;
        border-right: 2px solid #383838;
        background: #535353;
        color: #f0f0f0;
        font-size: 25px;
        white-space: pre;
      }
      .view {
        display: flex;
        flex: 1;
        min-height: 0;
      }
      .left {
        display: flex;
        flex-direction: column;
        flex: 1;
        min-width: 0;
      }
      .canvas {
        position: relative;
        flex: 1;
        overflow: hidden;
        background: #737373;
      }
      .selection {
        position: absolute;
        left: 188px;
        top: 84px;
        width: 1608px;
        height: 930px;
      }
      .selection svg {
        width: 100%;
        height: 100%;
        overflow: visible;
      }
      .selection i {
        position: absolute;
        width: 16px;
        height: 16px;
        border: 2px solid #4f98e0;
        background: #fff;
        transform: translate(-50%, -50%);
      }
      .hint {
        display: flex;
        align-items: center;
        gap: 22px;
        height: 50px;
        padding-left: 10px;
        border-top: 2px solid #4a4a4a;
      }
      .hint b {
        width: 28px;
        height: 28px;
        border-radius: 14px;
        background: #c4c4c4;
        color: #535353;
        text-align: center;
      }
      .status {
        display: flex;
        height: 32px;
        overflow: hidden;
        padding-left: 6px;
      }
      .combo {
        display: flex;
        width: 140px;
        height: 42px;
        margin-right: 6px;
        border: 2px solid #5e5e5e;
        border-radius: 4px;
        background: #454545;
        color: #fff;
        font-size: 20px;
      }
      .combo input {
        flex: 1;
        padding: 4px 0 0 4px;
      }
      .combo button {
        width: 34px;
        border-left: 2px solid #5e5e5e;
        background: #4a4a4a;
      }
      .combo.page { width: 118px; margin: 0 18px; }
      .nav {
        display: flex;
        gap: 18px;
        padding-left: 10px;
      }
      .name {
        width: 400px;
        margin: 2px 0 0 18px;
        padding-top: 2px;
        border: solid #4a4a4a;
        border-width: 0 2px;
        text-align: center;
        color: #b4b4b4;
      }
      .play { width: 36px; }
      .scroll {
        display: flex;
        align-items: center;
        justify-content: space-between;
        flex: 1;
        padding: 0 12px;
        background: #4a4a4a;
        color: #999;
      }
      .scroll i {
        width: 50px;
        height: 30px;
        border-radius: 15px;
        background: #5e5e5e;
      }
      .vertical {
        display: flex;
        flex-direction: column;
        justify-content: space-between;
        align-items: center;
        width: 32px;
        margin-bottom: 32px;
        padding: 11px 0;
        background: #4a4a4a;
        color: #999;
      }
    `;
  }
  html() {
    const handles = [[0, 0], [50, 0], [100, 0], [0, 50], [100, 50], [0, 100], [50, 100], [100, 100]];
    return `
      <div class="tabs"><div class="tab"><span>무제-1*  @  82.5%(CMYK/미리 보기)</span><button aria-label="닫기"><svg width="14" height="12"><path d="M2 0l10 12M12 0L2 12" stroke="#f0f0f0" stroke-width="2"/></svg></button></div></div>
      <div class="view">
        <div class="left">
          <div class="canvas">
            <art-board style="left: 186px; top: 188px">01</art-board>
            <art-board style="left: 1450px; top: 82px">02</art-board>
            <art-board style="left: 574px; top: 670px">03</art-board>
            <art-board style="left: 1062px; top: 580px">04</art-board>
            <div class="selection">
              <svg fill="none" stroke-width="2">
                <rect width="100%" height="100%" stroke="#4f98e0"/>
                <rect width="100%" height="100%" stroke="#fff" stroke-dasharray="10 10"/>
              </svg>
              ${handles.map(([x, y]) => `<i style="left: ${x}%; top: ${y}%"></i>`).join('')}
            </div>
          </div>
          <div class="hint"><b>?</b><span>도구 사용 방법을 알아보려면 '물음표' 아이콘을 선택하세요.</span></div>
          <div class="status">
            <div class="combo"><input aria-label="확대/축소" value="82.5%"><button aria-label="확대/축소 목록">${icon('chevron')}</button></div>
            <div class="combo"><input aria-label="회전" value="0°"><button aria-label="회전 목록">${icon('chevron')}</button></div>
            <div class="nav">
              <button aria-label="처음">${icon('first')}</button>
              <button aria-label="이전">${icon('prev')}</button>
            </div>
            <div class="combo page"><input aria-label="대지 번호" value="3"><button aria-label="대지 목록">${icon('chevron')}</button></div>
            <div class="nav" style="padding: 0">
              <button aria-label="다음">${icon('next')}</button>
              <button aria-label="마지막">${icon('last')}</button>
            </div>
            <div class="name">대지</div>
            <button class="play" aria-label="상태 표시줄 메뉴">${icon('next')}</button>
            <div class="scroll">${icon('chevronLeft')}<i></i>${icon('chevronRight')}</div>
          </div>
        </div>
        <div class="vertical">${icon('chevronUp')}${icon('chevron')}</div>
      </div>`;
  }
}
window.customElements.define('doc-window', DocWindow);

class PanelDock extends Panel {
  css() {
    return `
      :host {
        display: flex;
        flex-direction: column;
        width: 654px;
        flex: none;
        background: #4a4a4a;
      }
      header {
        display: flex;
        align-items: center;
        height: 24px;
        padding: 0 14px 0 50px;
        gap: 68px;
        border: solid #383838;
        border-width: 0 2px 2px;
        background: #424242;
      }
      header ai-icon:last-child { margin-left: auto; }
      .body {
        display: grid;
        grid-template-columns: 78px 78px 1fr;
        gap: 2px;
        flex: 1;
        min-height: 0;
      }
      .body > div {
        border: solid #383838;
        border-width: 0 2px;
        background: #535353;
      }
      section {
        display: flex;
        flex-direction: column;
        align-items: center;
        padding: 24px 0 0 2px;
        border-bottom: 2px solid #383838;
        background: repeating-linear-gradient(90deg, #383838 0 2px, #535353 2px 4px) 18px 6px / 38px 8px no-repeat;
      }
      section button {
        width: 58px;
        height: 48px;
        margin-bottom: 8px;
        border-radius: 6px;
      }
      section .on {
        border: 2px solid #5e5e5e;
        background: #353535;
        color: #c4c4c4;
      }
      .body .stack {
        display: flex;
        flex-direction: column;
        background: #4a4a4a;
      }
      ::slotted(swatch-panel) { flex: 1; }
    `;
  }
  html() {
    const groups = [
      ['wheel', 'info', 'artboards'],
      ['character', 'appearance', 'assets'],
      ['gradientPanel', 'opacity'],
      ['transform', 'strokes', 'alignLeft', 'pathfinder'],
      ['exportIcon'],
      ['brushes', 'symbols'],
      ['paragraph', 'opentype']
    ];
    const section = (names) => `<section>${names.map((name) =>
      `<button class="${name === 'alignLeft' ? 'on' : ''}" aria-label="${name}">${icon(name)}</button>`).join('')}</section>`;
    return `
      <header>${icon('collapse')}${icon('collapse')}${icon('expand')}</header>
      <div class="body">
        <div>${section(['layers'])}</div>
        <div>${groups.map(section).join('')}</div>
        <div class="stack"><slot></slot></div>
      </div>`;
  }
}
window.customElements.define('panel-dock', PanelDock);

// Tab strip shared by the docked and the floating panels
const TABS = `
  .tabs {
    display: flex;
    height: 54px;
    background: linear-gradient(#424242 52px, #383838 52px);
    font-size: 25px;
    color: #999;
  }
  .tabs > button {
    height: 52px;
    padding: 0 18px 4px;
    border-right: 2px solid #383838;
  }
  .tabs > .active {
    height: 54px;
    gap: 14px;
    background: #535353;
    color: #fff;
  }
  .tabs > .menu {
    margin-left: auto;
    padding: 2px 12px 0;
    border: 0;
    color: #b4b4b4;
  }
`;

class ColorPanel extends Panel {
  css() {
    return TABS + `
      :host {
        height: 722px;
        background: #535353;
        border-bottom: 2px solid #383838;
      }
      .content {
        display: grid;
        grid-template-columns: 86px 1fr;
        padding: 10px 10px 0;
      }
      .paint {
        display: flex;
        flex-wrap: wrap;
        align-content: flex-start;
        gap: 12px 18px;
        padding-top: 2px;
      }
      .row {
        display: grid;
        grid-template-columns: 36px 222px 78px 26px;
        align-items: center;
        height: 50px;
        padding-bottom: 2px;
        color: #b4b4b4;
      }
      .row label { padding-left: 10px; }
      .row .field { margin-left: 6px; }
      .row span { padding-left: 4px; }
      input[type=range] {
        appearance: none;
        height: 26px;
        background-repeat: no-repeat;
        background-position: 9px 1px;
        background-size: calc(100% - 18px) 10px;
      }
      input[type=range]::-webkit-slider-thumb {
        appearance: none;
        width: 18px;
        height: 16px;
        margin-top: 10px;
        background: #c4c4c4;
        clip-path: polygon(50% 0, 100% 40%, 100% 100%, 0 100%, 0 40%);
      }
      .quick {
        display: flex;
        align-items: center;
        grid-column: 1 / 3;
        height: 42px;
        margin-top: 8px;
      }
      .quick > button {
        width: 28px;
        height: 28px;
        margin-right: -2px;
        border: 2px solid #333;
      }
      .quick label {
        display: flex;
        align-items: center;
        gap: 12px;
        margin: 0 22px 0 auto;
      }
      .quick u { text-decoration-style: dotted; text-underline-offset: 6px; }
      .quick .hex { width: 130px; }
      .spectrum {
        display: block;
        width: calc(100% - 44px);
        height: 380px;
        margin: 12px 10px 0;
        border: 2px solid #333;
        background:
          linear-gradient(#fff, #fff0 52%, #0000 52%, #000 98%),
          linear-gradient(90deg, #e60012, #ef1a18 3%, #f8ee10 17%, #6ab82c 33%, #3c9a7c 46%, #2a6090 56%, #14368e 66%, #4c2a88 76%, #cc0a7c 87%, #e60012);
      }
    `;
  }
  html() {
    const channels = [
      ['C', '#fff, #8ed4f4 50%, #00b9ef 70%, #00a0e9'],
      ['M', '#fff, #f0a0c8 50%, #e4007f 97%'],
      ['Y', '#fff, #fff799 50%, #fff100 90%'],
      ['K', '#fff, #9fa0a0 50%, #231815']
    ];
    const row = ([name, stops]) => `
      <div class="row">
        <label for="${name}">${name}</label>
        <input type="range" id="${name}" value="0" style="background-image: linear-gradient(90deg, ${stops})">
        <input class="field" aria-label="${name} 값" value="0"><span>%</span>
      </div>`;
    return `
      <div class="tabs">
        <button class="active" style="padding-left: 10px"><ai-icon name="sorter" style="color: #b4b4b4"></ai-icon>색상</button>
        <button class="menu" aria-label="패널 메뉴">${icon('burger')}</button>
      </div>
      <div class="content">
        <div class="paint">
          <button aria-label="초기값">${icon('defaults')}</button>
          <button aria-label="칠과 획 교체">${icon('swap')}</button>
          <fill-stroke></fill-stroke>
        </div>
        <div style="margin-top: 3px">${channels.map(row).join('')}</div>
        <div class="quick">
          <button aria-label="없음" style="background: linear-gradient(-45deg, #fff 43%, #f00 43% 57%, #fff 57%)"></button>
          <button aria-label="검정" style="background: #000"></button>
          <button aria-label="흰색" style="background: #fff"></button>
          <label><u>#</u><input class="field hex" value="ffffff"></label>
        </div>
      </div>
      <button class="spectrum" aria-label="색상 스펙트럼"></button>`;
  }
}
window.customElements.define('color-panel', ColorPanel);

class SwatchPanel extends Panel {
  css() {
    return TABS + `
      :host {
        display: flex;
        flex-direction: column;
        min-height: 0;
        margin-top: 2px;
        background: #535353;
        border-top: 2px solid #383838;
      }
      .tools {
        display: flex;
        align-items: flex-end;
        height: 74px;
        padding: 0 10px;
        gap: 10px;
      }
      fill-stroke { margin: 0 auto 2px 0; }
      .tools > button {
        width: 52px;
        height: 52px;
        border: 2px solid #757575;
        border-radius: 4px;
      }
      .group { width: 98px; height: 52px; }
      .group button { flex: 1; }
      .swatches {
        flex: 1;
        position: relative;
        margin: 10px 10px 0;
        border: 2px solid #5e5e5e;
      }
      .row {
        display: flex;
        flex-wrap: wrap;
        gap: 2px;
        width: 424px;
        margin-bottom: 6px;
      }
      .row button {
        width: 26px;
        height: 26px;
      }
      .scroll {
        position: absolute;
        inset: 6px 6px 8px auto;
        display: flex;
        flex-direction: column;
        justify-content: space-between;
        color: #5e5e5e;
      }
      footer {
        display: flex;
        align-items: center;
        height: 38px;
        padding: 0 54px 0 20px;
        gap: 28px;
      }
      footer .gap { margin: 0 auto 0 -6px; }
    `;
  }
  html() {
    const cross = '#c8c8c8 25%, #fff 0 50%, #c8c8c8 0 75%, #fff 0';
    const checker = `repeating-conic-gradient(${cross}) 0 0 / 8px 8px`;
    const rows = [
      [
        'linear-gradient(-45deg, #0000 45%, #f00 45% 55%, #0000 55%), #fff',
        'radial-gradient(circle, #555 2px, #eee 2px 4px, #555 4px 5px, #eee 5px 9px, #777 9px 10px, #0000 10px), linear-gradient(90deg, #0000 12px, #555 12px 14px, #0000 14px), linear-gradient(#eee 12px, #555 12px 14px, #eee 14px)',
        '#fff', '#060101', '#e81417', '#eeed34', '#68b62f', '#70c6d6', '#1c469c', '#a8529a',
        '#b4262c', '#de1e26', '#e55728', '#ee8e25', '#f2a93f', '#f1e72f', '#d1d72f', '#8abf43', '#38ad4c', '#1d8e45',
        '#116632', '#26ad72', '#1ea295', '#2aa0d4', '#0d6bb0', '#272c87', '#1b2852', '#5d2a87', '#8b2386', '#911c5a',
        '#c5195a', '#dd2277', '#c5ae96', '#988573', '#706254', '#50443f', '#c39a6c', '#a47b52', '#8a6139', '#704b21',
        '#5c3518', '#3e1f0d', 'linear-gradient(90deg, #fff, #98908a 30%, #000)',
        'linear-gradient(90deg, #d5def0, #9cc3e4 30%, #1c8cc8 60%, #0b5ba8)',
        `linear-gradient(90deg, #f070a8, #f070a820), ${checker}`,
        'radial-gradient(circle, #fff, #f28d28 70%)',
        `radial-gradient(circle, #0000 11px, #e0c060 11px 12px, #fff 12px), ${checker}`,
        'repeating-radial-gradient(circle at 6px 8px, #1d4f8c 0 3px, #c7d8ea 3px 4px, #2e66a4 4px 7px)',
        'radial-gradient(circle at 6px 20px, #8fbcc8 4px, #0000 5px), radial-gradient(circle at 18px 6px, #a8c480 5px, #0000 6px), radial-gradient(circle at 20px 20px, #9cc0d8 4px, #0000 5px), #e6e2c4'
      ],
      ['folder', '#060101', '#191b1a', '#2f3130', '#4b4b4b', '#636564', '#7f7f7f', '#999', '#b2b2b2', '#ccc', '#e4e4e4', '#f1f1ef'],
      ['folder', '#429cdb', '#78bd47', '#f28d28', '#e8222c', '#ee74a2', '#bac9d3']
    ];
    const swatch = (color, index) => {
      if (color === 'folder') return `<button aria-label="색상 그룹">${icon('folder')}</button>`;
      const ring = color === '#fff' && index === 2 ? '; border: 2px solid #fff; box-shadow: inset 0 0 0 2px #000' : '';
      return `<button aria-label="견본 ${index + 1}" style="background: ${color}${ring}"></button>`;
    };
    return `
      <div class="tabs">
        <button class="active" style="padding: 0 18px 6px 20px">견본</button>
        <button>라이브러리</button>
        <button class="menu" aria-label="패널 메뉴">${icon('burger')}</button>
      </div>
      <div class="tools">
        <fill-stroke></fill-stroke>
        <button aria-label="색상 테마">${icon('swatchCloud')}</button>
        <div class="group">
          <button aria-label="목록 보기">${icon('swatchList')}</button>
          <button class="on" aria-label="축소판 보기">${icon('swatchGrid')}</button>
        </div>
      </div>
      <div class="swatches">
        ${rows.map((row) => `<div class="row">${row.map(swatch).join('')}</div>`).join('')}
        <div class="scroll">${icon('chevronUp')}${icon('chevron')}</div>
      </div>
      <footer>
        <button aria-label="견본 라이브러리">${icon('library')}</button>
        <button class="gap" aria-label="라이브러리에 추가">${icon('addLibrary')}</button>
        <button aria-label="견본 종류">${icon('kinds')}</button>
        <button aria-label="견본 옵션">${icon('swatchOptions')}</button>
        <button aria-label="새 색상 그룹">${icon('folderBig')}</button>
        <button aria-label="새 견본">${icon('plusBox')}</button>
        <button aria-label="견본 삭제">${icon('trash')}</button>
      </footer>`;
  }
}
window.customElements.define('swatch-panel', SwatchPanel);

class AlignPanel extends Panel {
  css() {
    return TABS + `
      :host {
        position: absolute;
        right: 574px;
        top: 544px;
        z-index: 2;
        width: 484px;
        border: 2px solid #383838;
        border-top: 8px solid #333;
        background: #535353;
        box-shadow: -4px 2px 8px #0004;
      }
      .tabs .clipped {
        width: 124px;
        justify-content: flex-start;
        overflow: hidden;
      }
      .more {
        display: flex;
        align-items: center;
        gap: 14px;
        margin: 0 12px 2px auto;
        color: #c4c4c4;
      }
      .more hr {
        width: 2px;
        height: 22px;
        margin: 0;
        border: 0;
        background: #999;
      }
      .block {
        margin: 0 10px;
        padding: 16px 0 18px;
        border-bottom: 2px solid #4a4a4a;
      }
      h3 {
        margin: 0 0 20px;
        font-size: 22px;
        font-weight: 400;
        line-height: 28px;
      }
      .icons {
        display: grid;
        grid-template-columns: repeat(3, 72px) 48px repeat(3, 72px);
        margin-left: -10px;
      }
      .icons button { height: 36px; }
      .icons button:nth-child(4) { grid-column: 5; }
      .split {
        display: flex;
        padding: 10px 10px 8px;
      }
      .split > div { padding-top: 6px; }
      .split > div:first-child {
        width: 262px;
        border-right: 2px solid #4a4a4a;
      }
      .split h3 { margin-bottom: 12px; }
      .line {
        display: flex;
        align-items: center;
        height: 52px;
      }
      .spacing {
        display: flex;
        width: 116px;
        height: 42px;
        margin-left: 20px;
        border-radius: 4px;
        background: #585858;
        color: #757575;
        font-size: 20px;
      }
      .steps {
        display: flex;
        flex-direction: column;
        justify-content: space-around;
        align-items: center;
        width: 38px;
        border-right: 2px solid #535353;
      }
      .spacing input { flex: 1; padding-left: 4px; }
      .targets button {
        width: 50px;
        height: 52px;
        border-radius: 4px;
        color: #757575;
      }
      .targets .current { margin: 0 12px 0 14px; background: #585858; color: #888; }
    `;
  }
  html() {
    const row = (...names) => `<div class="icons">${names.map((name) => `<button aria-label="${name}">${icon(name)}</button>`).join('')}</div>`;
    return `
      <div class="tabs">
        <button style="padding: 0 0 4px 20px">변형</button>
        <button style="padding: 0 20px 4px">획</button>
        <button class="active" style="padding: 0 16px 6px 8px; font-weight: 500"><ai-icon name="sorter" style="color: #b4b4b4"></ai-icon>정렬</button>
        <button class="clipped">패스파인더</button>
        <div class="more"><button aria-label="더 보기">${icon('expandBig')}</button><hr><button aria-label="패널 메뉴">${icon('burger')}</button></div>
      </div>
      <div class="block">
        <h3>오브젝트 정렬:</h3>
        ${row('alignLeft', 'alignCenter', 'alignRight', 'alignTop', 'alignMiddle', 'alignBottom')}
      </div>
      <div class="block">
        <h3>오브젝트 분포:</h3>
        ${row('distTop', 'distMiddle', 'distBottom', 'distLeft', 'distCenter', 'distRight')}
      </div>
      <div class="split">
        <div>
          <h3>분포 간격:</h3>
          <div class="line">
            <button style="margin: 0 24px 0 8px" aria-label="세로 간격">${icon('spaceV')}</button>
            <button aria-label="가로 간격">${icon('spaceH')}</button>
            <div class="spacing"><div class="steps">${icon('chevronUp')}${icon('chevron')}</div><input aria-label="간격" value="0 mm"></div>
          </div>
        </div>
        <div>
          <h3 style="margin-left: 22px">정렬 대상:</h3>
          <div class="line targets" style="margin-left: 20px">
            <button aria-label="대지에 정렬">${icon('toArtboard')}</button>
            <button class="current" aria-label="선택 항목에 정렬">${icon('toSelection')}</button>
            <button aria-label="주요 오브젝트에 정렬">${icon('toKey')}</button>
          </div>
        </div>
      </div>`;
  }
}
window.customElements.define('align-panel', AlignPanel);

class TaskBar extends Panel {
  css() {
    return `
      :host {
        display: grid;
        grid-template-columns: 514px auto 1fr;
        align-items: center;
        height: 96px;
        border-top: 2px solid #3d434e;
        background: linear-gradient(90deg, #1c222c, #1a2231 19%, #111e58 24%, #131f5c 30%, #152159 45%, #191e3c 51%, #181e44 54%, #101f5c 60%, #121f58 63%, #1c2026 69%, #202224 74%, #1c212c 78%, #1c222e);
        color: #fff;
        font-size: 24px;
      }
      .weather {
        position: relative;
        justify-self: start;
        margin: 0 0 6px 40px;
      }
      .weather span {
        position: absolute;
        left: 22px;
        top: -14px;
        width: 32px;
        height: 32px;
        border-radius: 16px;
        background: #ff99a4;
        color: #000;
        font-size: 21px;
        line-height: 31px;
      }
      .apps { display: flex; gap: 8px; }
      .apps button {
        position: relative;
        width: 80px;
        height: 80px;
        border-radius: 8px;
      }
      .apps .current {
        background: #fff1;
        box-shadow: inset 0 0 0 2px #fff1;
      }
      .apps .open::after {
        content: "";
        position: absolute;
        bottom: 2px;
        width: 12px;
        height: 6px;
        border-radius: 3px;
        background: #9a9fb4;
      }
      .apps .current::after { width: 32px; background: #4cc2ff; }
      .tray {
        display: flex;
        align-items: center;
        justify-content: flex-end;
        padding: 0 40px 2px 0;
      }
      .tray > ai-icon { margin-right: 36px; }
      time {
        margin: 0 18px 0 30px;
        line-height: 32px;
        text-align: right;
        white-space: pre-line;
      }
    `;
  }
  html() {
    const open = ['explorer', 'talk', 'chrome', 'notion', 'illustrator'];
    const apps = Object.keys(APPS).map((name) => {
      const classes = [open.includes(name) ? 'open' : '', name === 'illustrator' ? 'current' : ''].join(' ');
      return `<button class="${classes}" aria-label="${name}"><ai-icon app name="${name}"></ai-icon></button>`;
    });
    return `
      <button class="weather" aria-label="위젯">
        <svg width="56" height="34" viewBox="0 0 48 32"><path d="M10 32a10 10 0 0 1-2-19Q11 1 22 1t15 12a10 10 0 0 1 2 19z" fill="#8db4f2"/><path d="M10 30q8-4 12-14 6-6 14-3 12 2 10 17z" fill="#a9c8f8"/></svg>
        <span>4</span>
      </button>
      <div class="apps">${apps.join('')}</div>
      <div class="tray">
        ${icon('trayUp')}${icon('sync')}${icon('inputMode')}${icon('wifi')}
        <ai-icon name="mute" style="margin: 0 16px 0 -22px"></ai-icon>
        <ai-icon name="battery" style="margin: 0"></ai-icon>
        <time datetime="2025-01-16T09:39">오전 9:39\n2025-01-16</time>
        <ai-icon name="doNotDisturb" style="margin: 0"></ai-icon>
      </div>`;
  }
}
window.customElements.define('task-bar', TaskBar);
</script>
</body>
</html>
